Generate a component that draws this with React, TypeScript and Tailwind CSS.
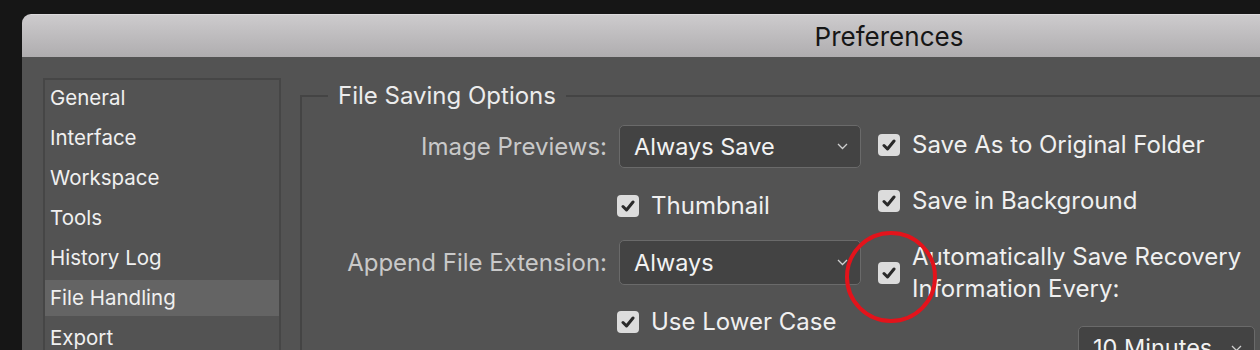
import type { ReactNode } from 'react';

const font = { fontFamily: 'Inter, "Noto Sans", sans-serif' };

function Check({ children, multi }: { children: ReactNode; multi?: boolean }) {
  return (
    <div className="flex items-center gap-[12px]">
      <div className="w-[22px] h-[22px] shrink-0 rounded-[4px] bg-[#dcdcdc] flex items-center justify-center">
        <svg width="14" height="12" viewBox="0 0 14 12">
          <path d="M2 6.5 L5.5 10 L12 2" fill="none" stroke="#2a2a2a" strokeWidth="3" strokeLinecap="round" strokeLinejoin="round" />
        </svg>
      </div>
      <span className={`text-[24px] leading-[32px] text-[#f0f0f0] ${multi ? '' : 'whitespace-nowrap'}`}>
        {children}
      </span>
    </div>
  );
}

function Select({ value, className }: { value: string; className: string }) {
  return (
    <div className={`flex items-center justify-between rounded-[5px] border border-[#6a6a6a] bg-[#434343] pl-[14px] pr-[12px] ${className}`}>
      <span className="text-[23.5px] text-[#f2f2f2] whitespace-nowrap">{value}</span>
      <svg width="11" height="7" viewBox="0 0 11 7">
        <path d="M1 1 L5.5 5.5 L10 1" fill="none" stroke="#cfcfcf" strokeWidth="1.3" />
      </svg>
    </div>
  );
}

const items = ['General', 'Interface', 'Workspace', 'Tools', 'History Log', 'File Handling', 'Export'];

export default function App() {
  return (
    <div className="w-[1260px] h-[350px] overflow-hidden bg-[#161616] pt-[14px] pl-[22px]" style={font}>
      <div className="w-[1734px] rounded-tl-[9px] rounded-tr-[9px] overflow-hidden">
        <div className="h-[43px] bg-gradient-to-b from-[#cdcbcd] to-[#afadaf] border-t border-[#dcdadc] flex items-center justify-center">
          <span className="text-[26px] text-[#161616]">Preferences</span>
        </div>
        <div className="h-[300px] bg-[#535353] flex pt-[21px] pl-[21px]">
          <div className="w-[238px] h-[300px] border-2 border-[#464646] flex flex-col gap-[4px] shrink-0">
            {items.map((it) => (
              <div
                key={it}
                className={`h-[36px] flex items-center pl-[5px] text-[20.5px] text-[#f0f0f0] ${it === 'File Handling' ? 'bg-[#646464]' : ''}`}
              >
                {it}
              </div>
            ))}
          </div>
          <fieldset className="ml-[19px] mt-[4px] w-[1400px] h-[300px] border-2 border-[#444444] relative">
            <legend className="ml-[26px] px-[10px] text-[24px] leading-[28px] text-[#ececec]">File Saving Options</legend>
            <div className="flex pt-[15px]">
              <div className="flex flex-col w-[559px] shrink-0">
                <div className="flex items-center">
                  <span className="w-[305px] text-right text-[24px] text-[#c9c9c9] whitespace-nowrap">Image Previews:</span>
                  <Select value="Always Save" className="ml-[12px] w-[242px] h-[43px]" />
                </div>
                <div className="ml-[315px] mt-[22px]">
                  <Check>Thumbnail</Check>
                </div>
                <div className="flex items-center mt-[18px]">
                  <span className="w-[305px] text-right text-[24px] text-[#c9c9c9] whitespace-nowrap">Append File Extension:</span>
                  <Select value="Always" className="ml-[12px] w-[242px] h-[45px]" />
                </div>
                <div className="ml-[315px] mt-[21px]">
                  <Check>Use Lower Case</Check>
                </div>
              </div>
              <div className="flex flex-col ml-[17px] pt-[4px]">
                <Check>Save As to Original Folder</Check>
                <div className="mt-[24px]">
                  <Check>Save in Background</Check>
                </div>
                <div className="mt-[24px]">
                  <Check multi>
                    Automatically Save Recovery
                    <br />
                    Information Every:
                  </Check>
                </div>
                <Select value="10 Minutes" className="ml-[200px] mt-[21px] w-[177px] h-[44px]" />
              </div>
            </div>
          </fieldset>
        </div>
      </div>
      <div className="absolute left-[845px] top-[231px] w-[92px] h-[92px] rounded-full border-[4px] border-[#e3131b]" />
    </div>
  );
}
